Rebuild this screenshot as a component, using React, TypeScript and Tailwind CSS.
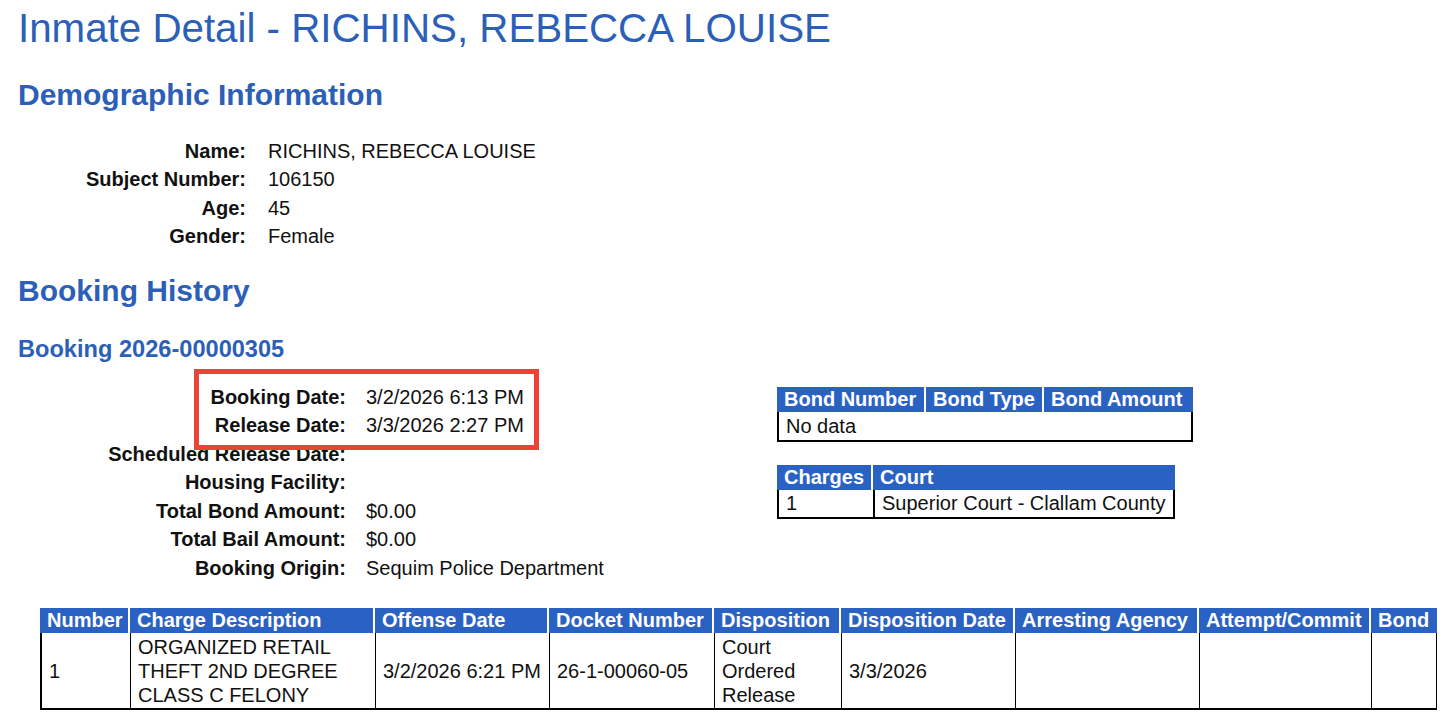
import React from 'react';

const demographics: [string, string][] = [
  ['Name:', 'RICHINS, REBECCA LOUISE'],
  ['Subject Number:', '106150'],
  ['Age:', '45'],
  ['Gender:', 'Female'],
];

const booking: [string, string][] = [
  ['Booking Date:', '3/2/2026 6:13 PM'],
  ['Release Date:', '3/3/2026 2:27 PM'],
  ['Scheduled Release Date:', ''],
  ['Housing Facility:', ''],
  ['Total Bond Amount:', '$0.00'],
  ['Total Bail Amount:', '$0.00'],
  ['Booking Origin:', 'Sequim Police Department'],
];

const chargeCols = [
  { label: 'Number', w: 'w-[90px]' },
  { label: 'Charge Description', w: 'w-[245px]' },
  { label: 'Offense Date', w: 'w-[174px]' },
  { label: 'Docket Number', w: 'w-[165px]' },
  { label: 'Disposition', w: 'w-[127px]' },
  { label: 'Disposition Date', w: 'w-[174px]' },
  { label: 'Arresting Agency', w: 'w-[184px]' },
  { label: 'Attempt/Commit', w: 'w-[172px]' },
  { label: 'Bond', w: 'w-[66px]' },
];

const th = 'bg-[#2a62c3] text-white font-bold text-left px-[7px] h-[25px] leading-[25px] border-r-2 border-white last:border-r-0 whitespace-nowrap';
const td = 'border-l border-b-2 border-black last:border-r px-[7px] align-middle';

const App: React.FC = () => {
  return (
    <div className="relative min-h-[717px] w-[1456px] bg-white text-[#111] font-['Liberation_Sans',Arial,sans-serif] overflow-hidden">
      <h1 className="pl-[18px] pt-[6px] text-[40.3px] leading-[46px] text-[#2c5fb7]">
        Inmate Detail - RICHINS, REBECCA LOUISE
      </h1>

      <h2 className="pl-[18px] mt-[27px] text-[30px] leading-[32px] font-bold text-[#2c5fb7]">
        Demographic Information
      </h2>

      <div className="mt-[26px] grid grid-cols-[246px_auto] gap-x-[22px] text-[20px] leading-[28.4px]">
        {demographics.map(([k, v]) => (
          <React.Fragment key={k}>
            <div className="text-right font-bold">{k}</div>
            <div>{v}</div>
          </React.Fragment>
        ))}
      </div>

      <h2 className="pl-[18px] mt-[24px] text-[30px] leading-[32px] font-bold text-[#2c5fb7]">
        Booking History
      </h2>

      <h3 className="pl-[18px] mt-[29px] text-[23.6px] leading-[26px] font-bold text-[#2c5fb7]">
        Booking 2026-00000305
      </h3>

      <div className="mt-[21px] flex">
        <div className="w-[777px] shrink-0 grid grid-cols-[346px_auto] content-start gap-x-[20px] text-[20px] leading-[28.5px]">
          {booking.map(([k, v]) => (
            <React.Fragment key={k}>
              <div className="text-right font-bold">{k}</div>
              <div>{v}</div>
            </React.Fragment>
          ))}
        </div>

        <div className="pt-[4px] flex flex-col gap-[23px] text-[20px]">
          <table className="border-separate border-spacing-0 w-[416px]">
            <thead>
              <tr>
                <th className={`${th} w-[149px]`}>Bond Number</th>
                <th className={`${th} w-[118px]`}>Bond Type</th>
                <th className={th}>Bond Amount</th>
              </tr>
            </thead>
            <tbody>
              <tr>
                <td colSpan={3} className="border-l-2 border-r-2 border-b-2 border-black px-[7px] h-[30px] leading-[28px]">
                  No data
                </td>
              </tr>
            </tbody>
          </table>

          <table className="border-separate border-spacing-0 w-[398px]">
            <thead>
              <tr>
                <th className={`${th} w-[95px]`}>Charges</th>
                <th className={th}>Court</th>
              </tr>
            </thead>
            <tbody>
              <tr>
                <td className="border-l-2 border-b-2 border-black px-[7px] h-[29px] leading-[27px]">1</td>
                <td className="border-l-2 border-r-2 border-b-2 border-black px-[7px] h-[29px] leading-[27px] whitespace-nowrap">
                  Superior Court - Clallam County
                </td>
              </tr>
            </tbody>
          </table>
        </div>
      </div>

      <div className="pl-[40px] mt-[26px]">
        <table className="border-separate border-spacing-0 table-fixed w-[1397px] text-[20px]">
          <thead>
            <tr>
              {chargeCols.map((c) => (
                <th key={c.label} className={`${th} ${c.w}`}>{c.label}</th>
              ))}
            </tr>
          </thead>
          <tbody>
            <tr className="leading-[24px]">
              <td className={`${td} border-l-2 h-[77px]`}>1</td>
              <td className={td}>ORGANIZED RETAIL THEFT 2ND DEGREE CLASS C FELONY</td>
              <td className={td}>3/2/2026 6:21 PM</td>
              <td className={td}>26-1-00060-05</td>
              <td className={td}>Court Ordered Release</td>
              <td className={td}>3/3/2026</td>
              <td className={td}></td>
              <td className={td}></td>
              <td className={`${td} border-r-2`}></td>
            </tr>
          </tbody>
        </table>
      </div>

      <div className="absolute left-[194px] top-[369px] w-[345px] h-[81px] border-[5px] border-[#ec4237] pointer-events-none" />
    </div>
  );
};

export default App;
